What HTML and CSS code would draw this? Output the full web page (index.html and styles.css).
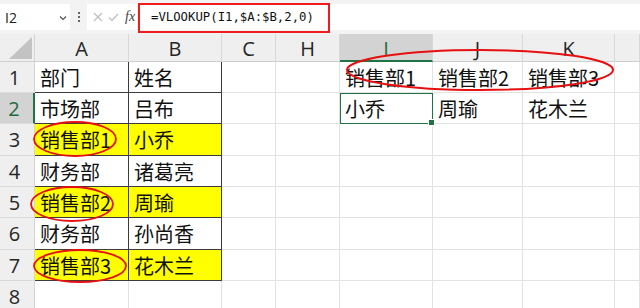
FILE: index.html
```html
<!DOCTYPE html>
<html lang="zh">
<head>
<meta charset="utf-8">
<link rel="stylesheet" href="styles.css">
</head>
<body>
<div class="app">
  <div class="fbar">
    <div class="namebox">
      <span class="ref">I2</span>
      <svg class="chev" width="8" height="6" viewBox="0 0 8 6"><polyline points="1,1.5 4,4.5 7,1.5" fill="none" stroke="#555" stroke-width="1.2"/></svg>
    </div>
    <div class="dots"><i></i><i></i><i></i></div>
    <div class="fnbtns">
      <svg width="10" height="10" viewBox="0 0 10 10"><path d="M1 1 L9 9 M9 1 L1 9" stroke="#bdbdbd" stroke-width="1.2" fill="none"/></svg>
      <svg width="11" height="9" viewBox="0 0 11 9"><polyline points="1,4.5 4,7.5 10,1" stroke="#bdbdbd" stroke-width="1.2" fill="none"/></svg>
      <span class="fx">fx</span>
    </div>
    <div class="finput">=VLOOKUP(I1,$A:$B,2,0)</div>
  </div>

  <div class="sheet">
    <div class="corner"><svg width="24" height="23" viewBox="0 0 24 23"><polygon points="23,0 23,22 0,22" fill="#c3c3c3"/></svg></div>
    <div class="h">A</div>
    <div class="h">B</div>
    <div class="h">C</div>
    <div class="h">H</div>
    <div class="h hsel">I</div>
    <div class="h">J</div>
    <div class="h">K</div>
    <div class="h"></div>

    <div class="r">1</div>
    <div class="c d">部门</div>
    <div class="c d">姓名</div>
    <div class="c"></div>
    <div class="c"></div>
    <div class="c">销售部1</div>
    <div class="c">销售部2</div>
    <div class="c">销售部3</div>
    <div class="c"></div>

    <div class="r rsel">2</div>
    <div class="c d">市场部</div>
    <div class="c d">吕布</div>
    <div class="c"></div>
    <div class="c"></div>
    <div class="c sel">小乔</div>
    <div class="c">周瑜</div>
    <div class="c">花木兰</div>
    <div class="c"></div>

    <div class="r">3</div>
    <div class="c d y">销售部1</div>
    <div class="c d y">小乔</div>
    <div class="c"></div>
    <div class="c"></div>
    <div class="c"></div>
    <div class="c"></div>
    <div class="c"></div>
    <div class="c"></div>

    <div class="r">4</div>
    <div class="c d">财务部</div>
    <div class="c d">诸葛亮</div>
    <div class="c"></div>
    <div class="c"></div>
    <div class="c"></div>
    <div class="c"></div>
    <div class="c"></div>
    <div class="c"></div>

    <div class="r">5</div>
    <div class="c d y">销售部2</div>
    <div class="c d y">周瑜</div>
    <div class="c"></div>
    <div class="c"></div>
    <div class="c"></div>
    <div class="c"></div>
    <div class="c"></div>
    <div class="c"></div>

    <div class="r">6</div>
    <div class="c d">财务部</div>
    <div class="c d">孙尚香</div>
    <div class="c"></div>
    <div class="c"></div>
    <div class="c"></div>
    <div class="c"></div>
    <div class="c"></div>
    <div class="c"></div>

    <div class="r">7</div>
    <div class="c d y">销售部3</div>
    <div class="c d y">花木兰</div>
    <div class="c"></div>
    <div class="c"></div>
    <div class="c"></div>
    <div class="c"></div>
    <div class="c"></div>
    <div class="c"></div>

    <div class="r">8</div>
    <div class="c"></div>
    <div class="c"></div>
    <div class="c"></div>
    <div class="c"></div>
    <div class="c"></div>
    <div class="c"></div>
    <div class="c"></div>
    <div class="c"></div>
  </div>

  <svg class="marks" width="640" height="308" viewBox="0 0 640 308">
    <rect x="139" y="4" width="190" height="28" fill="none" stroke="#ee1c1c" stroke-width="2"/>
    <ellipse cx="480" cy="70" rx="133" ry="20" fill="none" stroke="#e61010" stroke-width="2"/>
    <ellipse cx="75" cy="139" rx="41" ry="17" fill="none" stroke="#e61010" stroke-width="1.8"/>
    <ellipse cx="72" cy="204" rx="41" ry="17" fill="none" stroke="#e61010" stroke-width="1.8"/>
    <ellipse cx="80" cy="266" rx="46" ry="16" fill="none" stroke="#e61010" stroke-width="1.8"/>
  </svg>
</div>
</body>
</html>
```

FILE: styles.css
```css
* { box-sizing: border-box; }
html, body { margin: 0; padding: 0; }
body {
  width: 640px;
  height: 308px;
  overflow: hidden;
  background: #fff;
  font-family: "Open Sans", "Noto Sans CJK SC", sans-serif;
  color: #000;
}
.app { position: relative; width: 640px; height: 308px; overflow: hidden; }

.fbar {
  height: 34px;
  display: flex;
  align-items: stretch;
  background: #f3f3f3;
  padding: 4px 0 4px 0;
}
.namebox {
  width: 70px;
  background: #fff;
  display: flex;
  align-items: center;
  justify-content: space-between;
  padding: 0 3px 0 5px;
}
.ref { font-family: "Open Sans", sans-serif; font-size: 14px; color: #222; }
.chev { margin-top: 1px; }
.dots {
  width: 17px;
  display: flex;
  flex-direction: column;
  align-items: center;
  justify-content: center;
  gap: 2px;
}
.dots i { display: block; width: 2px; height: 2px; background: #666; }
.fnbtns {
  width: 50px;
  background: #fff;
  display: flex;
  align-items: center;
  gap: 5px;
  padding-left: 6px;
}
.fx {
  font-family: "Liberation Serif", serif;
  font-style: italic;
  font-size: 14px;
  color: #444;
  margin-left: 1px;
}
.finput {
  flex: 1;
  margin-left: 3px;
  background: #fff;
  display: flex;
  align-items: center;
  padding-left: 11px;
  font-family: "DejaVu Sans Mono", "Liberation Mono", monospace;
  font-size: 12.3px;
  color: #111;
}

.sheet {
  display: grid;
  grid-template-columns: 35px 94px 93px 54px 64px 93px 90px 92px 1fr;
  grid-template-rows: 28px 31px 31px 32px 31px 31px 32px 31px 31px;
}
.corner {
  background: #efefef;
  border-right: 1px solid #d4d4d4;
  border-bottom: 1px solid #cfcfcf;
  display: flex;
  align-items: flex-end;
  justify-content: flex-end;
  padding: 0 1px 1px 0;
}
.h {
  background: #efefef;
  border-right: 1px solid #d8d8d8;
  border-bottom: 1px solid #cfcfcf;
  display: flex;
  align-items: center;
  justify-content: center;
  font-family: "Open Sans", sans-serif;
  font-size: 20px;
  color: #262626;
  padding-top: 2px;
}
.hsel {
  background: #d3d3d3;
  color: #1e6b3f;
  border-bottom: 2px solid #217346;
}
.r {
  background: #efefef;
  border-right: 1px solid #d4d4d4;
  border-bottom: 1px solid #dadada;
  display: flex;
  align-items: center;
  justify-content: center;
  padding-right: 5px;
  font-family: "Open Sans", sans-serif;
  font-size: 20px;
  color: #262626;
}
.rsel {
  background: #d3d3d3;
  color: #1e6b3f;
  border-right: 2px solid #217346;
}
.c {
  border-right: 1px solid #e2e2e2;
  border-bottom: 1px solid #e2e2e2;
  display: flex;
  align-items: center;
  padding-left: 5px;
  font-family: "Noto Sans CJK SC", "Noto Sans", sans-serif;
  font-size: 20px;
  white-space: nowrap;
  color: #111;
}
.d {
  border-right: 1px solid #3c3c3c;
  border-bottom: 1px solid #3c3c3c;
}
.y { background: #ffff00; }
.sel {
  position: relative;
  border: 1px solid #217346;
  padding-left: 4px;
}
.sel::after {
  content: "";
  position: absolute;
  right: -3px;
  bottom: -3px;
  width: 5px;
  height: 5px;
  background: #217346;
  border: 1px solid #fff;
}

.marks {
  position: absolute;
  left: 0;
  top: 0;
  pointer-events: none;
}
```
